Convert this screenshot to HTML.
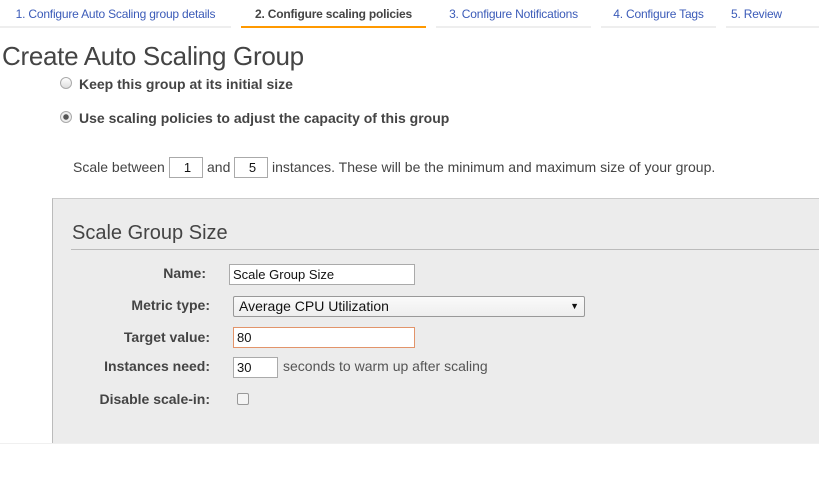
<!DOCTYPE html>
<html><head><style>
*{margin:0;padding:0;box-sizing:border-box}
body{width:819px;height:478px;background:#fff;font-family:"Liberation Sans",sans-serif;color:#444;position:relative;overflow:hidden}
.a{position:absolute;white-space:nowrap}
.tab{position:absolute;top:7px;font-size:12px;color:#3b5bb8;height:21px;border-bottom:2px solid #eee;text-align:center;white-space:nowrap;letter-spacing:-0.2px}
.lbl{position:absolute;font-size:14px;font-weight:bold;color:#444;text-align:right;width:140px;left:70px}
.inp{position:absolute;background:#fff;border:1px solid #aaa;font-size:13px;color:#111;padding-left:3px;line-height:19px;height:21px}
</style></head><body>
<div class="tab" style="left:0;width:231px">1. Configure Auto Scaling group details</div>
<div class="tab" style="left:241px;width:185px;color:#444;font-weight:bold;border-bottom-color:#f90">2. Configure scaling policies</div>
<div class="tab" style="left:436px;width:155px">3. Configure Notifications</div>
<div class="tab" style="left:601px;width:115px">4. Configure Tags</div>
<div class="tab" style="left:726px;width:93px;text-align:left;padding-left:5px">5. Review</div>
<div class="a" style="left:2px;top:41px;font-size:26px;color:#444;letter-spacing:-0.3px">Create Auto Scaling Group</div>
<div class="a" style="left:60px;top:77px;width:12px;height:12px;border-radius:50%;border:1px solid #aaa;background:linear-gradient(#fff,#ddd)"></div>
<div class="a" style="left:79px;top:76px;font-size:14px;font-weight:bold">Keep this group at its initial size</div>
<div class="a" style="left:60px;top:111px;width:12px;height:12px;border-radius:50%;border:1px solid #aaa;background:radial-gradient(circle,#555 0 2.5px,#eee 3px)"></div>
<div class="a" style="left:79px;top:110px;font-size:14px;font-weight:bold">Use scaling policies to adjust the capacity of this group</div>
<div class="a" style="left:73px;top:159px;font-size:14px;color:#444">Scale between</div>
<div class="inp" style="left:169px;top:157px;width:34px;text-align:center">1</div>
<div class="a" style="left:207px;top:159px;font-size:14px">and</div>
<div class="inp" style="left:234px;top:157px;width:34px;text-align:center">5</div>
<div class="a" style="left:272px;top:159px;font-size:14px">instances. These will be the minimum and maximum size of your group.</div>
<div class="a" style="left:52px;top:198px;width:767px;height:246px;background:#ececec;border-left:1px solid #bbb;border-top:1px solid #ccc"></div>
<div class="a" style="left:0;top:443px;width:819px;height:1px;background:#f0f0f0"></div>
<div class="a" style="left:72px;top:222px;font-size:20px;color:#444">Scale Group Size</div>
<div class="a" style="left:71px;top:249px;width:748px;height:1px;background:#bbb"></div>
<div class="lbl" style="top:265px;left:66px">Name:</div>
<div class="inp" style="left:229px;top:264px;width:186px">Scale Group Size</div>
<div class="lbl" style="top:297px">Metric type:</div>
<div class="inp" style="left:233px;top:296px;width:352px;background:linear-gradient(#fafafa,#eee);border-color:#999;border-radius:2px;font-size:14px;padding-left:5px">Average CPU Utilization<span style="position:absolute;right:5px;font-size:9px">▼</span></div>
<div class="lbl" style="top:329px">Target value:</div>
<div class="inp" style="left:233px;top:327px;width:182px;border-color:#e2946a">80</div>
<div class="lbl" style="top:358px">Instances need:</div>
<div class="inp" style="left:233px;top:357px;width:45px">30</div>
<div class="a" style="left:283px;top:358px;font-size:14px;color:#555">seconds to warm up after scaling</div>
<div class="lbl" style="top:391px">Disable scale-in:</div>
<div class="a" style="left:237px;top:393px;width:12px;height:12px;border:1px solid #999;border-radius:2px;background:#f4f4f4"></div>
</body></html>
